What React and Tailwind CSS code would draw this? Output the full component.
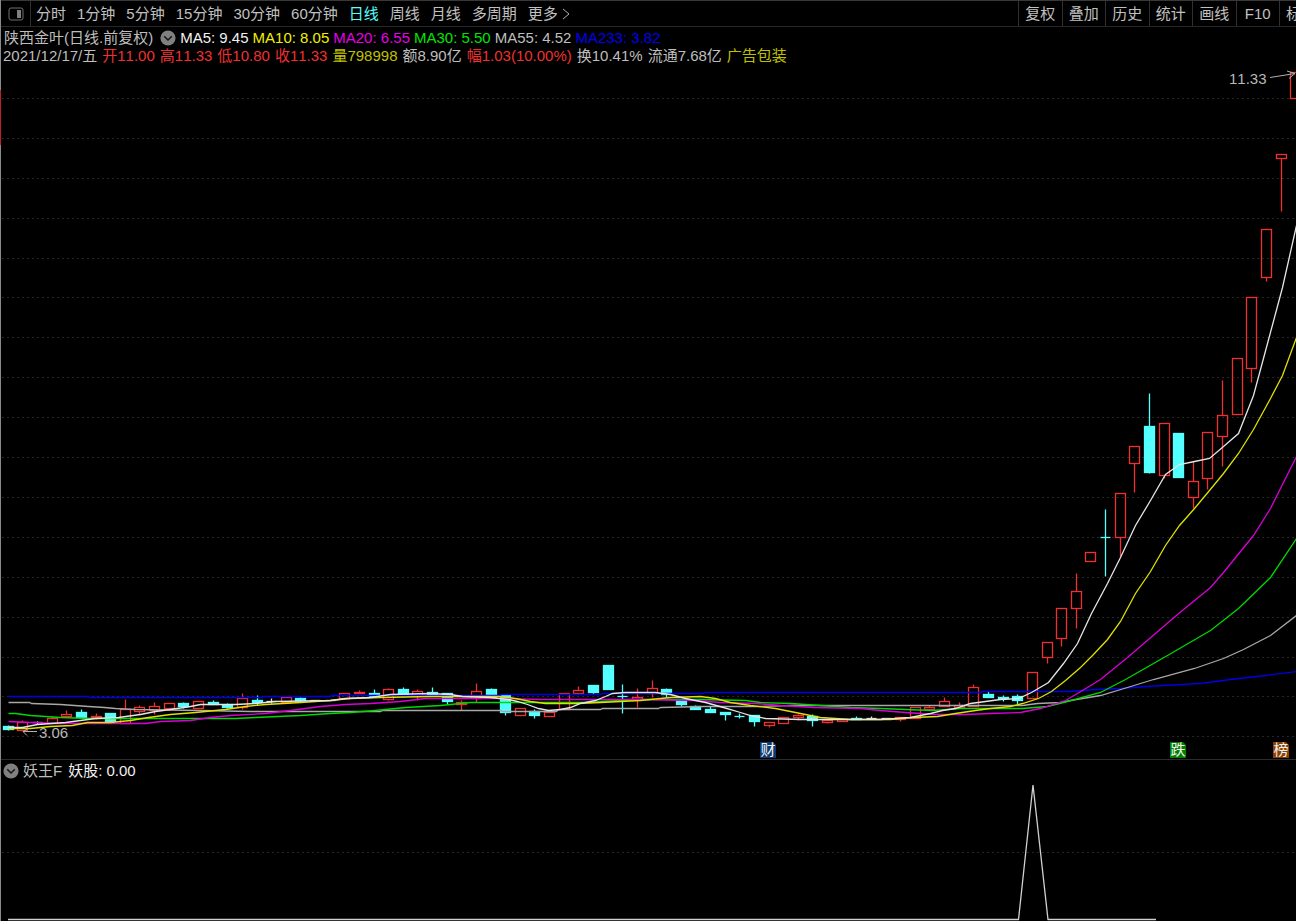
import React from "react";

const periods = ["分时", "1分钟", "5分钟", "15分钟", "30分钟", "60分钟", "日线", "周线", "月线", "多周期"];
const tools = ["复权", "叠加", "历史", "统计", "画线", "F10"];

const averages = [
  { text: "MA5: 9.45", color: "text-[#f0f0f0]" },
  { text: "MA10: 8.05", color: "text-[#f0f000]" },
  { text: "MA20: 6.55", color: "text-[#e800e8]" },
  { text: "MA30: 5.50", color: "text-[#00e600]" },
  { text: "MA55: 4.52", color: "text-[#bebebe]" },
  { text: "MA233: 3.82", color: "text-[#0000f0]" },
];

const quote = [
  { text: "2021/12/17/五", color: "text-[#bebebe]" },
  { text: "开11.00", color: "text-[#f03030]" },
  { text: "高11.33", color: "text-[#f03030]" },
  { text: "低10.80", color: "text-[#f03030]" },
  { text: "收11.33", color: "text-[#f03030]" },
  { text: "量798998", color: "text-[#c0c000]" },
  { text: "额8.90亿", color: "text-[#bebebe]" },
  { text: "幅1.03(10.00%)", color: "text-[#f03030]" },
  { text: "换10.41%", color: "text-[#bebebe]" },
  { text: "流通7.68亿", color: "text-[#bebebe]" },
  { text: "广告包装", color: "text-[#c0c000]" },
];

// kind (r: rising, d: falling, w: flat), body top, body bottom, wick top, wick bottom
const candles = [
  ["d", 726, 729, 725, 730], ["r", 722, 730, 720, 730], ["w", 722, 722, 721, 724], ["r", 718, 723, 716, 723],
  ["r", 714, 716, 710, 716], ["d", 712, 717, 709, 717], ["r", 716, 717, 713, 719], ["d", 713, 721, 713, 721],
  ["r", 709, 723, 699, 723], ["r", 707, 711, 705, 714], ["r", 706, 710, 702, 714], ["r", 703, 708, 703, 708],
  ["d", 703, 706, 702, 708], ["r", 701, 708, 701, 708], ["d", 702, 704, 700, 704], ["d", 705, 707, 703, 708],
  ["r", 698, 707, 693, 709], ["d", 700, 702, 695, 705], ["w", 701, 701, 698, 703], ["r", 697, 702, 697, 702],
  ["d", 698, 700, 697, 702], ["w", 700, 700, 700, 700], ["w", 700, 700, 700, 700], ["r", 693, 698, 693, 698],
  ["r", 692, 693, 690, 693], ["d", 693, 696, 689, 696], ["r", 689, 699, 688, 700], ["d", 689, 695, 687, 695],
  ["r", 691, 695, 689, 700], ["d", 692, 694, 687, 694], ["d", 693, 701, 693, 704], ["r", 702, 704, 700, 710],
  ["r", 691, 698, 683, 702], ["d", 689, 697, 688, 697], ["d", 695, 712, 695, 715], ["r", 708, 715, 708, 715],
  ["d", 711, 715, 709, 718], ["r", 712, 716, 711, 716], ["r", 693, 709, 693, 709], ["r", 690, 693, 686, 694],
  ["d", 685, 692, 685, 694], ["d", 665, 689, 665, 689], ["d", 696, 696, 684, 713], ["r", 697, 699, 688, 707],
  ["r", 688, 693, 680, 697], ["d", 689, 694, 688, 697], ["d", 699, 704, 699, 706], ["d", 706, 709, 705, 709],
  ["d", 709, 712, 706, 712], ["d", 712, 714, 712, 720], ["d", 716, 716, 713, 718], ["d", 715, 721, 715, 726],
  ["r", 722, 725, 722, 727], ["r", 717, 723, 717, 723], ["r", 715, 717, 714, 720], ["d", 716, 720, 714, 726],
  ["r", 720, 722, 720, 723], ["r", 719, 721, 719, 721], ["d", 718, 719, 716, 719], ["w", 718, 718, 716, 719],
  ["w", 718, 718, 718, 718], ["r", 717, 719, 717, 721], ["r", 707, 718, 707, 718], ["r", 707, 709, 705, 709],
  ["r", 701, 706, 697, 706], ["r", 705, 707, 702, 707], ["r", 687, 706, 684, 706], ["d", 694, 697, 691, 697],
  ["d", 697, 698, 695, 701], ["d", 696, 700, 694, 704], ["r", 672, 698, 672, 698], ["r", 642, 657, 642, 663],
  ["r", 608, 638, 608, 646], ["r", 591, 608, 573, 628], ["r", 552, 561, 552, 561], ["d", 537, 537, 509, 576],
  ["r", 493, 537, 493, 556], ["r", 446, 463, 446, 492], ["d", 426, 472, 393, 473], ["r", 423, 475, 423, 478],
  ["d", 433, 477, 433, 477], ["r", 481, 497, 461, 508], ["r", 432, 478, 432, 489], ["r", 415, 436, 380, 466],
  ["r", 358, 414, 358, 414], ["r", 297, 368, 297, 382], ["r", 229, 277, 229, 281], ["r", 154, 158, 154, 211],
  ["r", 72, 98, 72, 98],
];

const lines = [
  { color: "stroke-[#0000e6]", points: "8,696 88,696 89,697 262,697 263,696 330,696 331,695 500,695 501,694 600,694 602,693 702,693 704,692 980,692 982,691 1070,691 1095,689 1120,688 1145,686 1163,685 1200,683 1230,679 1265,675 1296,671" },
  { color: "stroke-[#a8a8a8]", points: "8,702 29,702 31,703 60,704 88,706 104,707 115,708 135,709 200,710 250,711 380,711 382,710 500,710 502,711 556,711 558,709 600,709 602,708 658,708 660,707 703,706 760,706 792,705 1022,705 1037,703 1060,702 1070,700 1100,695 1127,687 1153,679 1194,668 1223,658 1243,649 1270,635 1296,615" },
  { color: "stroke-[#00d800]", points: "8,713 15,713 30,715 60,717 90,718 235,718 255,717 277,716 300,715 330,713 350,712 375,710 405,707 440,705 470,702 590,702 600,701 640,699 700,699 745,700 760,702 790,703 820,705 850,707 880,708 905,709 932,710 960,708 1022,708 1047,706 1067,701 1100,692 1125,679 1167,655 1210,630 1238,608 1270,577 1296,538" },
  { color: "stroke-[#d800d8]", points: "8,721 30,722 60,723 145,723 160,721 190,720 210,717 230,715 265,713 290,710 320,706 345,704 370,703 400,701 425,698 500,698 540,699 640,699 695,700 720,702 755,703 780,705 815,707 860,708 880,710 905,712 935,714 965,714 990,713 1020,712 1040,708 1065,700 1082,690 1100,679 1127,657 1177,614 1210,587 1223,572 1253,535 1270,508 1296,456" },
  { color: "stroke-[#e0e000]", points: "8,728 30,728 50,726 72,725 87,722 110,722 130,720 148,717 170,714 195,712 225,709 245,706 265,704 300,702 330,700 350,698 380,697 430,696 500,696 515,698 530,701 545,703 575,703 600,702 640,700 670,697 700,696 715,698 730,702 750,705 775,708 800,713 820,717 850,719 890,719 912,717 937,716 955,713 975,710 990,708 1010,706 1022,703 1038,698 1051,691 1065,680 1080,667 1093,654 1107,639 1120,621 1135,593 1150,571 1165,545 1179,525 1194,508 1209,490 1223,473 1238,453 1253,429 1270,398 1282,375 1296,337" },
  { color: "stroke-[#e6e6e6]", points: "8,727 22,727 37,724 65,722 80,720 95,718 118,717 140,714 155,711 170,709 190,706 200,704 235,704 255,703 275,701 330,700 345,698 370,697 390,694 430,693 450,694 462,696 490,697 508,699 517,701 527,704 538,708 548,710 560,709 570,707 580,703 595,700 605,696 612,693 625,692 655,692 670,694 685,698 705,702 723,707 740,712 750,715 765,718 800,719 880,719 895,718 910,717 930,713 942,710 955,708 970,703 985,701 1000,699 1018,698 1031,692 1048,682 1063,663 1077,643 1091,613 1107,583 1120,557 1135,525 1150,500 1165,474 1179,464 1194,461 1209,458 1223,446 1238,433 1253,395 1267,343 1282,287 1296,225" },
];

const gridRows = [98, 138, 178, 218, 258, 297, 337, 377, 417, 457, 497, 537, 577, 617, 657, 696, 736];

const tags = [
  { char: "财", x: 760, fill: "fill-[#0b3a70]" },
  { char: "跌", x: 1170, fill: "fill-[#008000]" },
  { char: "榜", x: 1273, fill: "fill-[#8a4000]" },
];

function Candle({ index, data }) {
  const [kind, top, bottom, high, low] = data;
  const x = Math.round(7.8 + 14.63 * index);
  if (kind === "r") {
    return (
      <g className="fill-none stroke-[#f03030]">
        {high < top && <path d={`M${x} ${high}V${top}`} />}
        {low > bottom && <path d={`M${x} ${bottom}V${low}`} />}
        <rect x={x - 5} y={top} width="10" height={bottom - top} />
      </g>
    );
  }
  const stroke = kind === "w" ? "stroke-[#e0e0e0] fill-none" : "stroke-[#54ffff] fill-[#54ffff]";
  return (
    <g className={stroke}>
      <path d={`M${x} ${high}V${low}`} />
      {top === bottom ? (
        <path d={`M${x - 5} ${top}H${x + 5}`} />
      ) : (
        <rect x={x - 5} y={top} width="10" height={bottom - top} />
      )}
    </g>
  );
}

function RoundToggle({ label }) {
  return (
    <button type="button" aria-label={label} className="shrink-0">
      <svg viewBox="0 0 16 16" className="block size-4">
        <circle cx="8" cy="8" r="7.6" className="fill-[#808080]" />
        <path d="M4.2 6.3 8 10l3.8-3.7" className="fill-none stroke-[#141414]" strokeWidth="1.5" />
      </svg>
    </button>
  );
}

function Toolbar() {
  return (
    <header className="flex h-[27px] items-stretch justify-between overflow-hidden border-t border-b border-t-[#383838] border-b-[#262626] text-[#c0c0c0]">
      <div className="flex shrink-0 items-stretch">
        <button type="button" aria-label="侧栏" className="flex w-[30px] items-center justify-center border-r border-[#303030]">
          <svg viewBox="0 0 16 14" className="block h-3.5 w-4">
            <rect x="1" y="1" width="14" height="12" rx="2" className="fill-none stroke-[#707070]" />
            <rect x="9" y="3" width="4" height="8" className="fill-[#808080]" />
          </svg>
        </button>
        <nav className="flex items-center gap-[11px] pl-[5px]">
          {periods.map((p) => (
            <button key={p} type="button" className={p === "日线" ? "text-[#54ffff]" : ""}>
              {p}
            </button>
          ))}
          <button type="button" className="flex items-center gap-1">
            更多
            <svg viewBox="0 0 8 12" className="block h-3 w-2">
              <path d="M1 1l6 5-6 5" className="fill-none stroke-[#b0b0b0]" />
            </svg>
          </button>
        </nav>
      </div>
      <div className="flex shrink-0 items-stretch">
        <div className="grid w-[261px] grid-cols-6">
          {tools.map((t) => (
            <button key={t} type="button" className="border-l border-[#303030]">
              {t}
            </button>
          ))}
        </div>
        <button type="button" className="w-[17px] overflow-hidden border-l border-[#303030] pl-[6px] text-left whitespace-nowrap">
          标
        </button>
      </div>
    </header>
  );
}

function PriceChart() {
  return (
    <svg viewBox="1 65 1295 694" className="block h-auto w-full text-[15px]" role="img" aria-label="日线K线图">
      <g transform="translate(0.5 0.5)">
        {gridRows.map((y) => (
          <path key={y} d={`M1.5 ${y}H1296`} className="stroke-[#262626]" strokeDasharray="2 3" />
        ))}
        <g strokeWidth="1.3">
          {candles.map((c, i) => (
            <Candle key={i} index={i} data={c} />
          ))}
          {lines.map((l) => (
            <polyline key={l.color} points={l.points} className={`fill-none ${l.color}`} />
          ))}
        </g>
      </g>
      <g className="fill-none stroke-[#b0b0b0]">
        <path d="M1270 77.5 1295 73.5M1287 71l8 2.5-6 5" />
        <path d="M37 731.5H23M28 728.5l-5 3 4 4" />
      </g>
      <text x="1229" y="84" className="fill-[#b8b8b8]">11.33</text>
      <text x="39" y="738" className="fill-[#b8b8b8]">3.06</text>
      {tags.map((t) => (
        <g key={t.char}>
          <path d={`M${t.x} 742h13l3 3v13h-16z`} className={t.fill} />
          <text x={t.x + 8} y="755" textAnchor="middle" className="fill-[#f0f0f0]">
            {t.char}
          </text>
        </g>
      ))}
    </svg>
  );
}

function IndicatorChart() {
  return (
    <svg viewBox="1 781 1295 140" className="block h-auto w-full" role="img" aria-label="妖王F">
      <g className="fill-none">
        <path d="M2 852.5H1296" className="stroke-[#262626]" strokeDasharray="2 3" />
        <path d="M8 919.5H1018.5L1033 785L1048 919.5H1156" className="stroke-[#d0d0d0]" strokeWidth="1.3" />
      </g>
    </svg>
  );
}

export default function App() {
  return (
    <div className="min-h-screen overflow-hidden bg-black font-['Liberation_Sans','Noto_Sans_CJK_SC',sans-serif] text-[15px] leading-[18px] [font-kerning:none]">
      <div className="relative min-h-screen border-l border-[#8a8a8a]">
        <span className="absolute top-[90px] -left-px h-[55px] w-px bg-[#c02020]" />
        <Toolbar />
        <main>
          <section>
            <div className="pt-[2px] whitespace-nowrap">
              <div className="flex h-[18px] items-center gap-1 pl-[3px]">
                <h1 className="mr-[3px] text-[#bebebe]">陕西金叶(日线.前复权)</h1>
                <RoundToggle label="主图指标" />
                {averages.map((a) => (
                  <span key={a.text} className={a.color}>
                    {a.text}
                  </span>
                ))}
              </div>
              <div className="flex h-[18px] items-center gap-[5px] pl-[2px]">
                {quote.map((q) => (
                  <span key={q.text} className={q.color}>
                    {q.text}
                  </span>
                ))}
              </div>
            </div>
            <PriceChart />
          </section>
          <section className="border-t border-[#2c2c2c]">
            <div className="flex h-[21px] items-center pl-[2px] whitespace-nowrap">
              <RoundToggle label="副图指标" />
              <h2 className="ml-1 text-[#bebebe]">妖王F</h2>
              <span className="ml-[6px] text-[#f0f0f0]">妖股: 0.00</span>
            </div>
            <IndicatorChart />
          </section>
        </main>
      </div>
    </div>
  );
}
